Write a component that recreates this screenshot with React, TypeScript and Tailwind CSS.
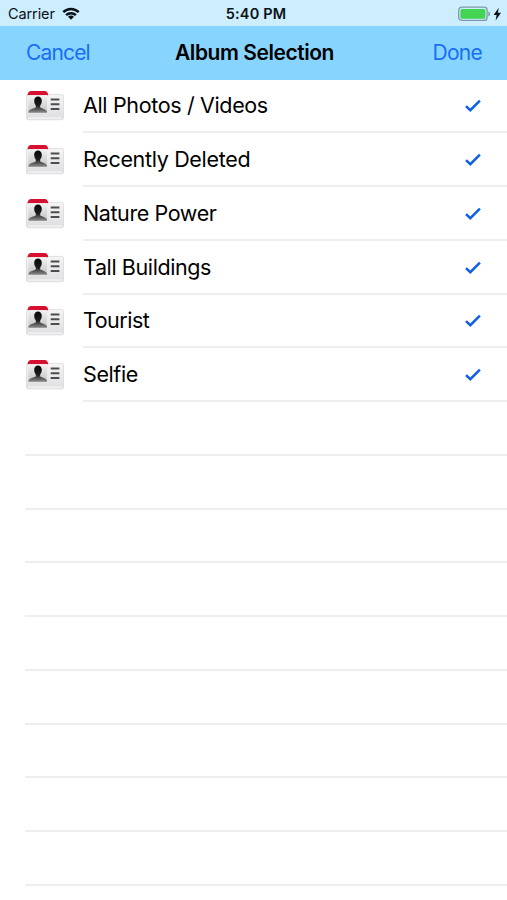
import React from 'react';

interface Album {
    name: string;
    tracking: string;
}

const albums: Album[] = [
    { name: 'All Photos / Videos', tracking: 'tracking-[-0.35px]' },
    { name: 'Recently Deleted', tracking: 'tracking-[-0.32px]' },
    { name: 'Nature Power', tracking: 'tracking-[-0.4px]' },
    { name: 'Tall Buildings', tracking: 'tracking-[-0.4px]' },
    { name: 'Tourist', tracking: 'tracking-[-0.5px]' },
    { name: 'Selfie', tracking: 'tracking-[-0.4px]' },
];

const EMPTY_ROWS = 9;

const WifiIcon: React.FC = () => (
    <svg width="18" height="13" viewBox="0 0 18 13" fill="none" stroke="#0b1216" strokeWidth="2.5">
        <path d="M1.3 5.1a11 11 0 0 1 15.4 0" />
        <path d="M4.1 8.2a6.9 6.9 0 0 1 9.8 0" />
        <path d="M9 12.8 6 9.8a4.1 4.1 0 0 1 6 0z" fill="#0b1216" stroke="none" />
    </svg>
);

const BatteryIcon: React.FC = () => (
    <svg width="45" height="16" viewBox="0 0 45 16" fill="none">
        <rect x="0.7" y="1.2" width="28.4" height="13.2" rx="3" stroke="#7f99a6" strokeWidth="1.3" />
        <rect x="2.4" y="2.9" width="25" height="9.8" rx="1.5" fill="#43d551" />
        <path d="M30.3 5.6c1.4.4 1.8 1.2 1.8 2.3s-.4 1.9-1.8 2.3z" fill="#7f99a6" />
        <path d="M40.8 1.8 35.6 8.9h3L37.6 14.4l5.4-7.6h-3.2z" fill="#0b1216" />
    </svg>
);

// Contact card with a red tab, a portrait and three lines of text
const AlbumIcon: React.FC = () => (
    <svg width="40" height="32" viewBox="0 0 40 32" fill="none">
        <defs>
            <linearGradient id="card" x1="0" y1="0" x2="0" y2="1">
                <stop offset="0" stopColor="#f5f5f6" />
                <stop offset="1" stopColor="#dedee0" />
            </linearGradient>
            <linearGradient id="person" x1="0" y1="0" x2="0" y2="1">
                <stop offset="0" stopColor="#080808" />
                <stop offset="0.55" stopColor="#1c1c1c" />
                <stop offset="1" stopColor="#8f8f8f" />
            </linearGradient>
            <linearGradient id="photo" x1="0" y1="0" x2="0" y2="1">
                <stop offset="0" stopColor="#f2f2f2" />
                <stop offset="1" stopColor="#c4c4c4" />
            </linearGradient>
        </defs>
        <rect x="1.5" y="4.4" width="37" height="25.4" rx="2" fill="url(#card)" stroke="#d6d6d8" strokeWidth="0.7" />
        <path d="M2.600 5.200V4Q3.600 1.100 5.600 1.100h14.500q2 0 3 2.900v1.200z" fill="#d8102f" />
        <rect x="3.500" y="5.200" width="18.500" height="17.600" fill="url(#photo)" />
        <path d="M13 6.400c2.300 0 3.800 1.700 3.800 4.400 0 2-.7 3.600-1.600 4.600v2c1.400 1 6 1.500 6.800 4.100v1.300H3.500v-1.300c.8-2.600 5.900-3.100 7.300-4.100v-2c-.9-1-1.600-2.600-1.600-4.600 0-2.700 1.500-4.400 3.800-4.400z" fill="url(#person)" />
        <path d="M25.700 9.400h8.700M25.700 14.200h8.700M25.700 19h8.700" stroke="#4c4c4e" strokeWidth="2" />
        <path d="M3 28.200h34" stroke="#f0f0f1" strokeWidth="2" />
    </svg>
);

const CheckIcon: React.FC = () => (
    <svg className="mt-[2px]" width="18" height="14" viewBox="0 0 18 14" fill="none" stroke="#0f5fe8" strokeWidth="2.5">
        <path d="M2 7.2 6.3 11.2 15.9 1.6" />
    </svg>
);

const AlbumRow: React.FC<{ album: Album }> = ({ album }) => (
    <li className="flex h-[53.75px] pl-[25px]">
        <div className="flex w-[58px] shrink-0 items-center">
            <AlbumIcon />
        </div>
        <div className="flex flex-1 items-center justify-between border-b-2 border-[#eeeeef] pr-[25px]">
            <span className={`whitespace-nowrap pt-[0.4px] text-[21.5px] text-black ${album.tracking}`}>{album.name}</span>
            <CheckIcon />
        </div>
    </li>
);

export default function App() {
    return (
        <div className="flex h-[900px] w-full flex-col overflow-hidden bg-white font-['Inter','Liberation_Sans',sans-serif]">
            <div className="grid h-[25.5px] shrink-0 grid-cols-3 items-center bg-[#cdeeff] pt-[2px] text-[14.5px] leading-none text-[#0b1216]">
                <div className="flex items-center gap-[7px] pl-2">
                    <span className="tracking-[-0.1px]">Carrier</span>
                    <WifiIcon />
                </div>
                <span className="pl-[5px] text-center font-semibold tracking-[0.15px]">5:40 PM</span>
                <div className="flex justify-end pr-1">
                    <BatteryIcon />
                </div>
            </div>

            <header className="grid h-[54px] shrink-0 grid-cols-[1fr_auto_1fr] items-center bg-[#87d5ff] px-[25px] text-[21px]">
                <button className="pl-px text-left tracking-[-0.85px] text-[#1a6df5]">Cancel</button>
                <h1 className="pl-[2px] font-semibold tracking-[-0.45px] text-black">Album Selection</h1>
                <button className="text-right tracking-[-0.75px] text-[#1a6df5]">Done</button>
            </header>

            <ul className="shrink-0">
                {albums.map((album) => (
                    <AlbumRow key={album.name} album={album} />
                ))}
                {Array.from({ length: EMPTY_ROWS }, (_, i) => (
                    <li key={i} className="h-[53.75px] pl-[25px]">
                        <div className="h-full border-b-2 border-[#eeeeef]" />
                    </li>
                ))}
            </ul>
        </div>
    );
}
